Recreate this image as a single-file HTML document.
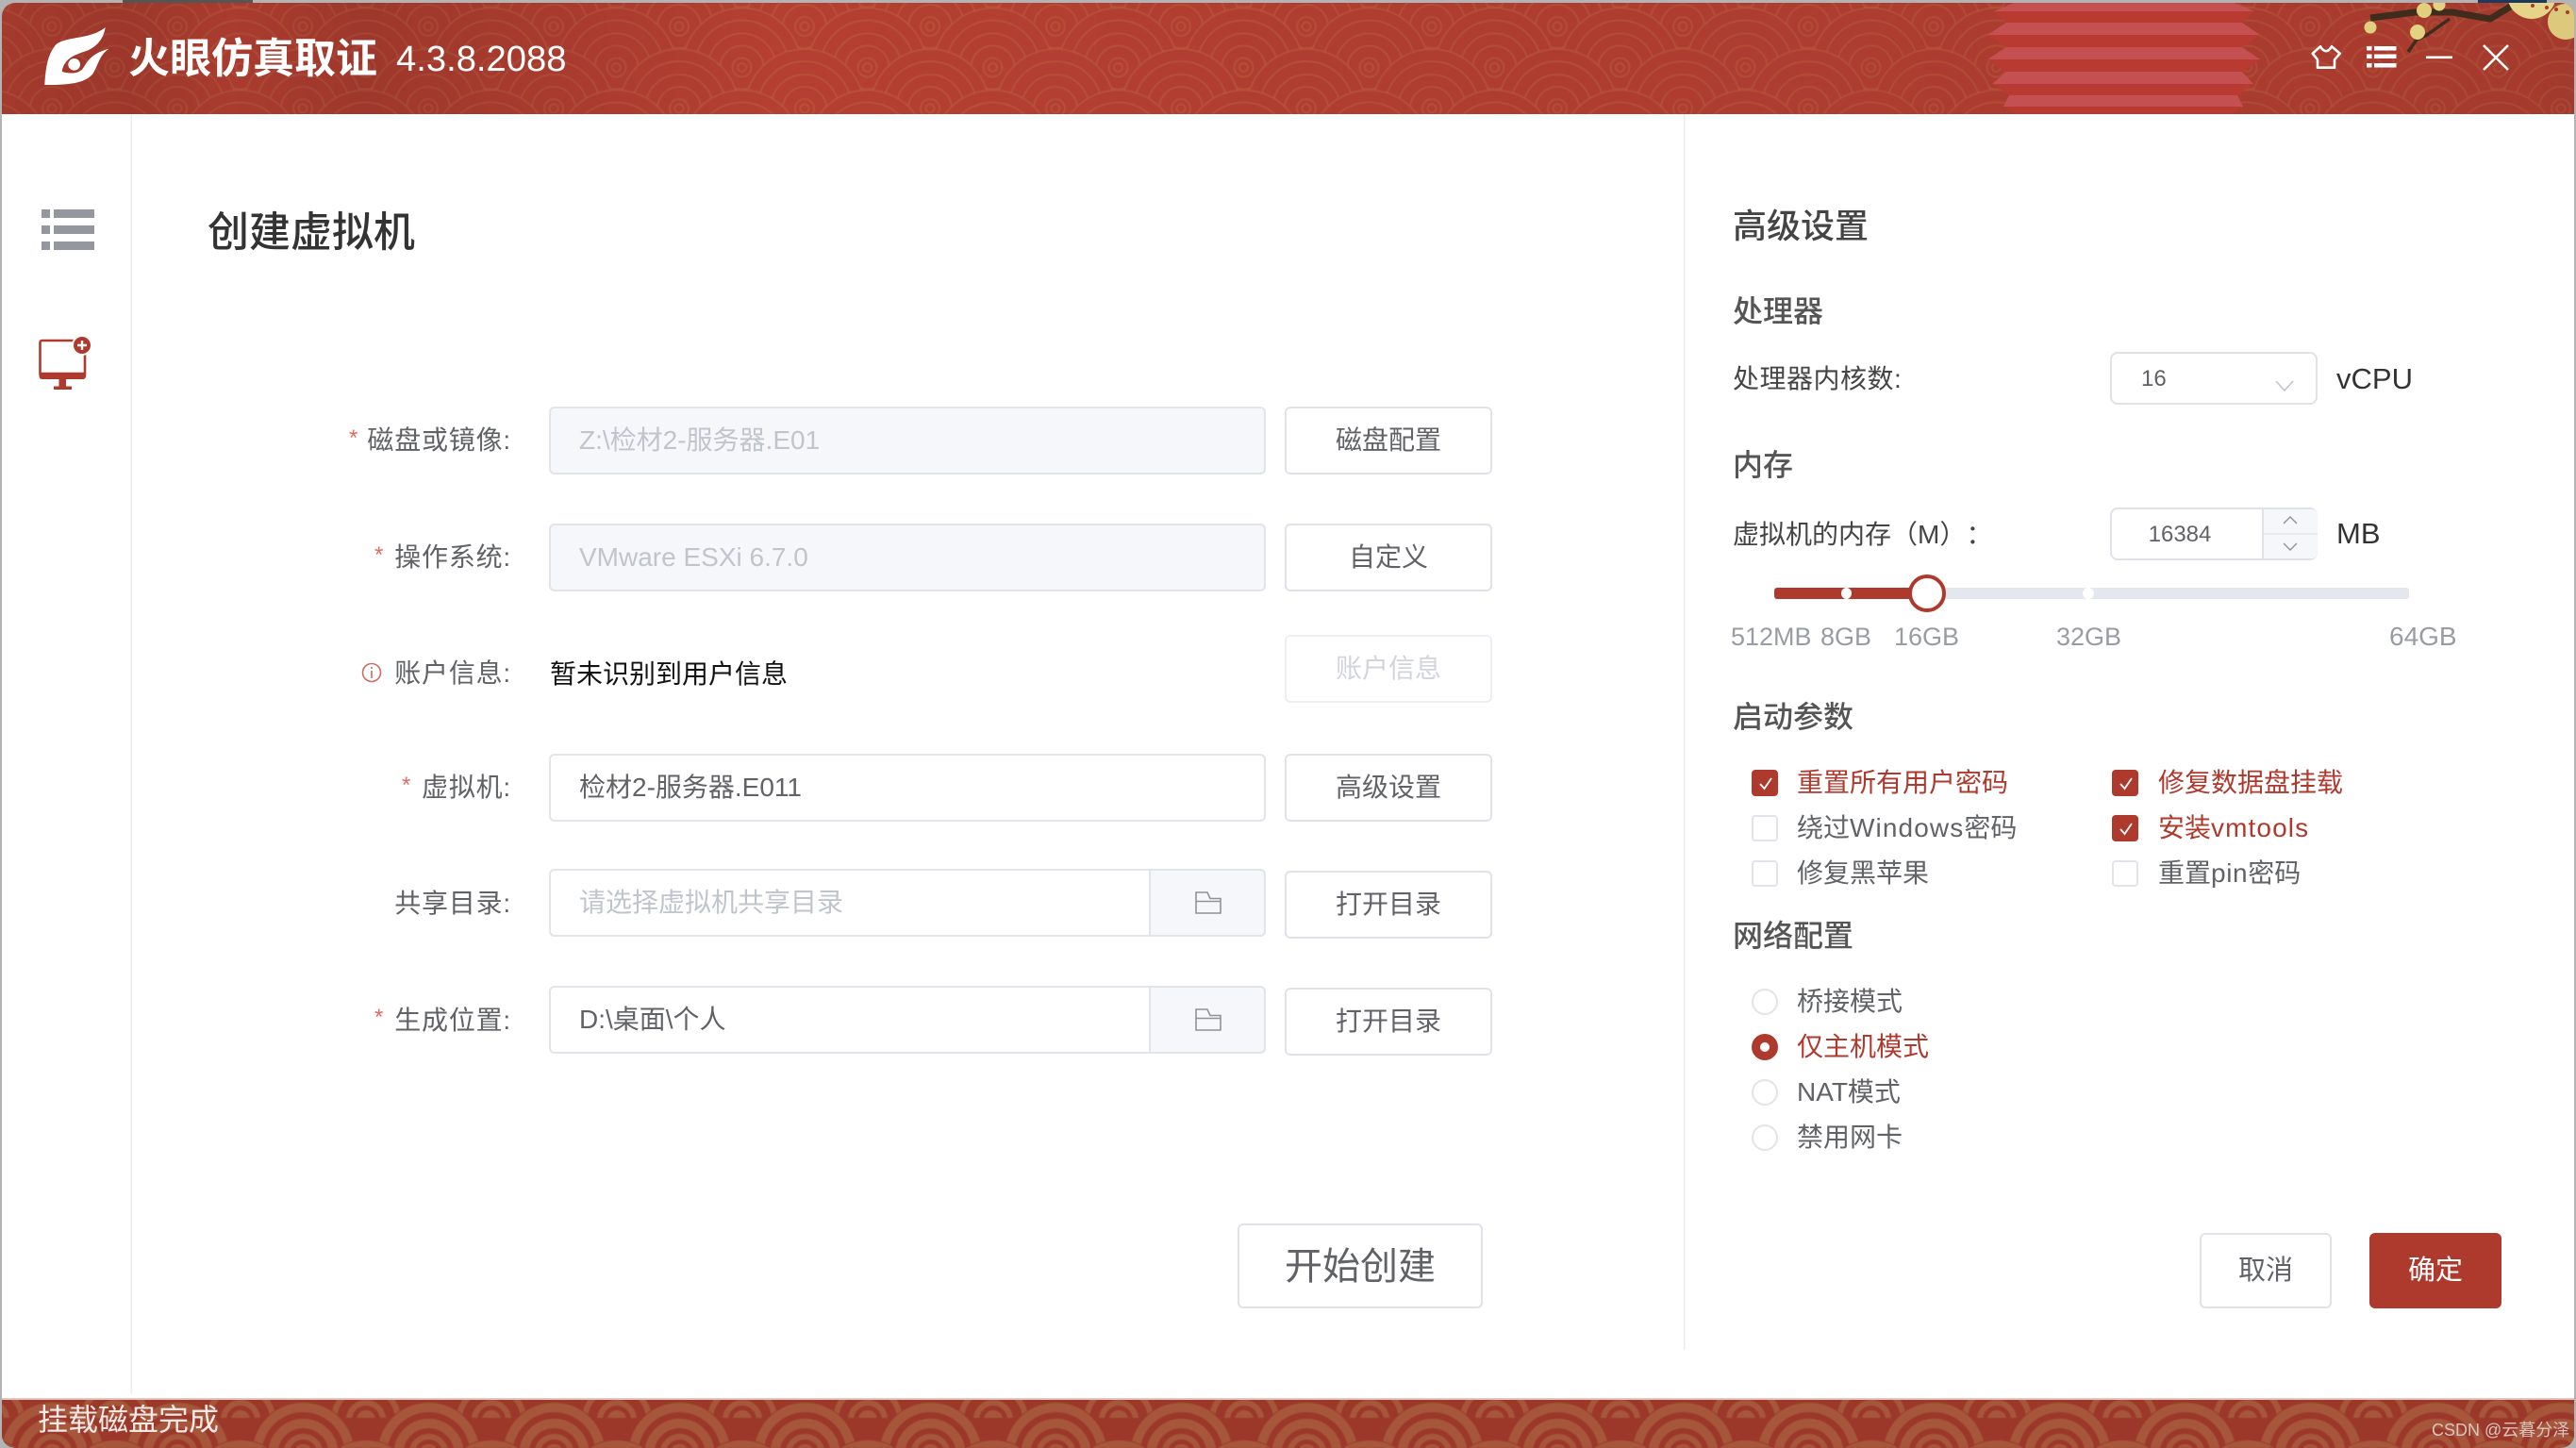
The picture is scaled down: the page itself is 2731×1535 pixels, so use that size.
<!DOCTYPE html>
<html lang="zh-CN"><head><meta charset="utf-8"><title>火眼仿真取证</title>
<style>
html,body{margin:0;padding:0;width:2731px;height:1535px;overflow:hidden;background:#b4b4b4}
body{position:relative;font-family:"Liberation Sans","Noto Sans CJK SC",sans-serif;color:#606266;text-spacing-trim:space-all}
svg.bg{position:absolute;left:0;top:0}
.t{position:absolute;white-space:nowrap;height:40px;line-height:40px;font-size:28px}
.r{text-align:right;right:calc(2731px - 542px);letter-spacing:.8px}
.a{position:absolute;white-space:nowrap;color:#dd6b62;font-size:24px;height:24px;line-height:24px}
.b{position:absolute;box-sizing:border-box;border:2px solid #e0e2e8;border-radius:6px;background:#fff;text-align:center;font-size:28px;color:#606266;white-space:nowrap}
.i{position:absolute;box-sizing:border-box;left:582px;width:760px;height:72px;border:2px solid #e2e4ea;border-radius:6px;background:#fff;font-size:28px;line-height:67px;padding-left:30px;color:#606266;white-space:nowrap;overflow:hidden}
.d{background:#f5f7fa;color:#c0c4cc}
.ap{position:absolute;left:1218px;width:124px;height:72px;box-sizing:border-box;border:2px solid #e2e4ea;border-radius:0 6px 6px 0;background:#f5f7fa}
.h{font-size:32px;font-weight:500;color:#555;left:1837px}
.c{position:absolute;box-sizing:border-box;width:28px;height:28px;border:2px solid #e2e4ea;border-radius:4px;background:#fff}
.c.on{background:#ae3a2e;border-color:#ae3a2e}
.c svg{position:absolute;left:3px;top:3px}
.o{position:absolute;box-sizing:border-box;left:1857px;width:28px;height:28px;border:2px solid #e2e4ea;border-radius:50%;background:#fff}
.on2{background:#ae3a2e;border-color:#ae3a2e}
.on2:after{content:"";position:absolute;left:7px;top:7px;width:10px;height:10px;background:#fff;border-radius:50%}
.red{color:#ae3a2e}
.lab{color:#9a9ca3;font-size:27px}
.w{letter-spacing:1.1px}
.btn{left:1362px;width:220px;height:72px;line-height:68px}
</style></head><body>
<svg class="bg" width="2731" height="1535" viewBox="0 0 2731 1535" xmlns="http://www.w3.org/2000/svg">
<defs>
<g id="s" fill="none" stroke="#bc543d" stroke-width="1.600">
<circle r="63" fill="#b63f30"/><circle r="50"/><circle r="36"/><circle r="23"/><circle r="10"/><circle r="4.500"/>
</g>
<g id="f" fill="none" stroke="#a6563a">
<circle r="55" fill="#9c382c" stroke="none"/>
<circle r="49" stroke-width="10"/><circle r="32" stroke-width="10"/><circle r="18" stroke-width="6"/><circle r="10" fill="#a6563a" stroke="none"/>
</g>
<g id="f0" fill="none" stroke="#a6563a">
<circle r="34" stroke-width="6"/><circle r="18" stroke-width="6"/><circle r="10" fill="#a6563a" stroke="none"/>
</g>
<pattern id="ph" patternUnits="userSpaceOnUse" width="133" height="87" patternTransform="translate(55 28)">
<rect width="133" height="87" fill="#b63f30"/>
<use href="#s" x="-66.500" y="-43.500"/><use href="#s" x="66.500" y="-43.500"/><use href="#s" x="199.500" y="-43.500"/>
<use href="#s" x="0" y="0"/><use href="#s" x="133" y="0"/>
<use href="#s" x="-66.500" y="43.500"/><use href="#s" x="66.500" y="43.500"/><use href="#s" x="199.500" y="43.500"/>
<use href="#s" x="0" y="87"/><use href="#s" x="133" y="87"/>
<use href="#s" x="-66.500" y="130.500"/><use href="#s" x="66.500" y="130.500"/><use href="#s" x="199.500" y="130.500"/>
</pattern>
<pattern id="pf" patternUnits="userSpaceOnUse" width="133" height="76" patternTransform="translate(255 1469)">
<rect width="133" height="76" fill="#9c382c"/>
<use href="#f0" x="0" y="36"/><use href="#f0" x="133" y="36"/>
<rect y="34" width="133" height="42" fill="#9c382c"/>
<use href="#f" x="-66.500" y="72"/><use href="#f" x="66.500" y="72"/><use href="#f" x="199.500" y="72"/>
<use href="#f" x="0" y="112"/><use href="#f" x="133" y="112"/>
</pattern>
<linearGradient id="sh" x1="0" x2="1" y1="0" y2="0">
<stop offset="0" stop-color="#000" stop-opacity=".1"/>
<stop offset=".05" stop-color="#000" stop-opacity=".14"/>
<stop offset=".09" stop-color="#000" stop-opacity=".07"/>
<stop offset=".14" stop-color="#000" stop-opacity=".13"/>
<stop offset=".24" stop-color="#000" stop-opacity=".06"/>
<stop offset=".3" stop-color="#000" stop-opacity=".01"/>
<stop offset=".4" stop-color="#000" stop-opacity=".02"/>
<stop offset=".55" stop-color="#000" stop-opacity=".04"/>
<stop offset=".7" stop-color="#000" stop-opacity=".05"/>
<stop offset=".9" stop-color="#000" stop-opacity=".07"/>
<stop offset="1" stop-color="#000" stop-opacity=".1"/>
</linearGradient>
<filter id="bl" x="-1%" y="-10%" width="102%" height="120%"><feGaussianBlur stdDeviation=".6"/></filter>
<clipPath id="win"><rect x="2" y="3" width="2727" height="1532" rx="14"/></clipPath>
<clipPath id="hc"><rect x="0" y="0" width="2731" height="121"/></clipPath>
</defs>
<rect width="2731" height="1535" fill="#b4b4b4"/>
<rect x="130" y="0" width="138" height="3" fill="#555"/>
<rect x="2627" y="0" width="73" height="3" fill="#1c3a5c"/>
<g clip-path="url(#win)">
<rect x="0" y="0" width="2731" height="1535" fill="#fff"/>
<g clip-path="url(#hc)"><rect x="0" y="-8" width="2731" height="140" fill="url(#ph)" filter="url(#bl)"/></g>
<rect x="0" y="0" width="2731" height="121" fill="url(#sh)"/>
<!-- lantern -->
<g>
<polygon points="2135,3 2369,3 2390,12 2114,12" fill="#c55052"/><polygon points="2114,12 2390,12 2377,24 2127,24" fill="#b93a30"/>
<polygon points="2127,24 2377,24 2396,37 2107,37" fill="#c55052"/><polygon points="2107,37 2396,37 2377,50 2127,50" fill="#b93a30"/>
<polygon points="2127,50 2377,50 2396,63 2107,63" fill="#c55052"/><polygon points="2107,63 2396,63 2377,76 2127,76" fill="#b93a30"/>
<polygon points="2127,76 2377,76 2389,89 2112,89" fill="#c55052"/><polygon points="2112,89 2389,89 2372,101 2130,101" fill="#b93a30"/>
<polygon points="2130,101 2372,101 2378,113 2124,113" fill="#c55052"/><polygon points="2124,113 2378,113 2366,121 2136,121" fill="#b93a30"/>
</g>
<!-- plum branch -->
<g>
<path d="M2513 19 L2560 13 L2600 13 L2640 20 L2668 3" fill="none" stroke="#3f2c1c" stroke-width="7" stroke-linejoin="round"/>
<path d="M2597 20 L2573 37 L2562 42 L2553 55" fill="none" stroke="#3f2c1c" stroke-width="3.500"/>
<circle cx="2513" cy="29" r="6.500" fill="#e0cf7d"/><circle cx="2563" cy="34" r="8" fill="#e3d27f"/>
<circle cx="2570" cy="11" r="8" fill="#e0cf7d"/><circle cx="2586" cy="5" r="6.500" fill="#e3d27f"/>
<circle cx="2684" cy="-6" r="26" fill="#e6d588"/><circle cx="2720" cy="23" r="19" fill="#dcc97b"/>
<circle cx="2685" cy="6" r="2" fill="#a83a2e"/><circle cx="2700" cy="8" r="2" fill="#a83a2e"/>
<circle cx="2710" cy="10" r="2" fill="#a83a2e"/><circle cx="2722" cy="13" r="2" fill="#a83a2e"/>
</g>
<!-- footer -->
<rect x="0" y="1483" width="2731" height="52" fill="#9c382c"/>
<rect x="0" y="1483" width="2731" height="52" fill="url(#pf)" filter="url(#bl)"/>
<rect x="0" y="1482" width="2731" height="2" fill="#e2c4bc"/>
<!-- dividers -->
<rect x="138.500" y="121" width="1.500" height="1356" fill="#ececee"/>
<rect x="1785" y="121" width="1.500" height="1310" fill="#ececee"/>
</g>
<!-- logo -->
<g transform="translate(30 15) scale(.3333)">
<path fill="#fff" d="M52 225C55 170 62 125 90 95C125 70 200 80 245 42C240 75 222 100 190 115C160 125 125 135 112 165C108 175 107 180 108 183C130 190 158 190 172 175C185 160 190 128 257 110C225 130 222 165 205 190C180 220 130 225 52 225Z"/>
<circle cx="146" cy="160" r="19" fill="#fff"/>
</g>
<!-- window controls -->
<path d="M2460 49.300Q2466 59 2472 49.300L2480.700 56.700L2475 63.300V71.700H2457V63.300L2451.700 56.700Z" fill="none" stroke="#fff" stroke-width="2.600" stroke-linejoin="round"/>
<g fill="#fff"><rect x="2509" y="49" width="5.500" height="4.500"/><rect x="2517" y="49" width="23.500" height="4.500"/><rect x="2509" y="57.500" width="5.500" height="4.500"/><rect x="2517" y="57.500" width="23.500" height="4.500"/><rect x="2509" y="67" width="5.500" height="4.500"/><rect x="2517" y="67" width="23.500" height="4.500"/>
<rect x="2572" y="59.500" width="28" height="2.600"/></g>
<path d="M2633 48L2659 74M2659 48L2633 74" stroke="#fff" stroke-width="2.600" fill="none"/>
<!-- sidebar -->
<g fill="#95979e"><rect x="44" y="222" width="9" height="9"/><rect x="57" y="222" width="43" height="9"/><rect x="44" y="239" width="9" height="9"/><rect x="57" y="239" width="43" height="9"/><rect x="44" y="256" width="9" height="9"/><rect x="57" y="256" width="43" height="9"/></g>
<g>
<path d="M44 361H88a2 2 0 0 1 2 2V396H42.500V363a2 2 0 0 1 2-2Z" fill="none" stroke="#ae3a2e" stroke-width="2.600"/>
<path d="M41.500 395H91V399a3 3 0 0 1-3 3H44.500a3 3 0 0 1-3-3Z" fill="#ae3a2e"/>
<rect x="62.500" y="402" width="7.500" height="8" fill="#ae3a2e"/><rect x="57" y="409.500" width="19" height="3.500" fill="#ae3a2e"/>
<circle cx="87" cy="366" r="11" fill="#fff"/><circle cx="87" cy="366" r="9" fill="#ae3a2e"/>
<path d="M82 366H92M87 361V371" stroke="#fff" stroke-width="2.400"/>
</g>
<!-- form icons -->
<circle cx="394" cy="713" r="9.500" fill="none" stroke="#d0695f" stroke-width="1.600"/>
<path d="M394 711V719M394 707V709" stroke="#d0695f" stroke-width="1.600"/>
</svg>

<div class="t" style="left:136px;top:41px;height:44px;line-height:44px;font-size:44px;font-weight:700;color:#fff">火眼仿真取证</div>
<div class="t" style="left:420px;top:43px;font-size:38.200px;color:#fff">4.3.8.2088</div>
<div class="t" style="left:220px;top:225px;height:44px;line-height:44px;font-size:44px;font-weight:500;color:#333">创建虚拟机</div>

<div class="a" style="left:370px;top:453px">*</div><div class="t r" style="top:447px">磁盘或镜像:</div>
<div class="i d" style="top:431px">Z:\检材2-服务器.E01</div>
<div class="b btn" style="top:431px">磁盘配置</div>

<div class="a" style="left:397px;top:577px">*</div><div class="t r" style="top:571px">操作系统:</div>
<div class="i d" style="top:555px">VMware ESXi 6.7.0</div>
<div class="b btn" style="top:555px">自定义</div>

<div class="t r" style="top:694px">账户信息:</div>
<div class="t" style="left:583px;top:695px;color:#111">暂未识别到用户信息</div>
<div class="b btn" style="top:673px;color:#d2d4da;border-color:#eceef2">账户信息</div>

<div class="a" style="left:426px;top:821px">*</div><div class="t r" style="top:815px">虚拟机:</div>
<div class="i" style="top:799px">检材2-服务器.E011</div>
<div class="b btn" style="top:799px">高级设置</div>

<div class="t r" style="top:938px">共享目录:</div>
<div class="i" style="top:921px;color:#c0c4cc">请选择虚拟机共享目录</div>
<div class="ap" style="top:921px"><svg width="120" height="68" style="position:absolute;left:0;top:0"><path d="M48 45V23H60L63 29.500H74V45ZM48 32.500H74" fill="none" stroke="#909299" stroke-width="1.600"/></svg></div>
<div class="b btn" style="top:923px">打开目录</div>

<div class="a" style="left:397px;top:1067px">*</div><div class="t r" style="top:1062px">生成位置:</div>
<div class="i" style="top:1045px">D:\桌面\个人</div>
<div class="ap" style="top:1045px"><svg width="120" height="68" style="position:absolute;left:0;top:0"><path d="M48 45V23H60L63 29.500H74V45ZM48 32.500H74" fill="none" stroke="#909299" stroke-width="1.600"/></svg></div>
<div class="b btn" style="top:1047px">打开目录</div>

<div class="b" style="left:1312px;top:1297px;width:260px;height:90px;line-height:89px;font-size:40px">开始创建</div>

<div class="t" style="left:1837px;top:220px;font-size:36px;font-weight:500;color:#444">高级设置</div>
<div class="t h" style="top:310px">处理器</div>
<div class="t" style="left:1837px;top:382px;color:#444;letter-spacing:.5px">处理器内核数:</div>
<div class="b" style="left:2237px;top:373px;width:220px;height:56px;line-height:53px;text-align:left;padding-left:31px;font-size:24px;border-radius:8px">16<svg width="20" height="12" style="position:absolute;left:173px;top:28px"><path d="M1 1L10 11L19 1" fill="none" stroke="#c0c4cc" stroke-width="1.600"/></svg></div>
<div class="t" style="left:2477px;top:382px;font-size:31px;color:#333">vCPU</div>

<div class="t h" style="top:473px">内存</div>
<div class="t" style="left:1837px;top:547px;color:#444">虚拟机的内存（M）：</div>
<div class="b" style="left:2237px;top:538px;width:220px;height:56px;line-height:53px;font-size:24px;border-radius:8px;padding-right:72px">16384
<div style="position:absolute;left:159px;top:0;width:57px;height:52px;background:#f5f7fa;border-left:2px solid #e0e2e8;border-radius:0 6px 6px 0"><div style="height:25px;border-bottom:2px solid #e8eaef"></div>
<svg width="57" height="52" style="position:absolute;left:0;top:0"><path d="M21 15L28 8L35 15M21 36L28 43L35 36" fill="none" stroke="#8f9198" stroke-width="1.400"/></svg></div></div>
<div class="t" style="left:2477px;top:546px;font-size:31px;color:#333">MB</div>

<div style="position:absolute;left:1881px;top:623px;width:673px;height:12px;background:#e4e7ed;border-radius:3px"></div>
<div style="position:absolute;left:1881px;top:623px;width:162px;height:12px;background:#ae3a2e;border-radius:3px 0 0 3px"></div>
<div style="position:absolute;left:1952px;top:623px;width:11px;height:12px;background:#fff;border-radius:50%"></div>
<div style="position:absolute;left:2208px;top:623px;width:12px;height:12px;background:#fff;border-radius:50%"></div>
<div style="position:absolute;left:2023px;top:609px;width:40px;height:40px;box-sizing:border-box;border:4px solid #ae3a2e;background:#fff;border-radius:50%"></div>
<div class="t lab" style="left:1835px;top:655px">512MB</div>
<div class="t lab" style="left:1930px;top:655px">8GB</div>
<div class="t lab" style="left:2008px;top:655px">16GB</div>
<div class="t lab" style="left:2180px;top:655px">32GB</div>
<div class="t lab" style="left:2533px;top:655px;font-size:28px">64GB</div>

<div class="t h" style="top:740px">启动参数</div>
<div class="c on" style="left:1857px;top:816px"><svg width="20" height="20"><path d="M4 10L8.500 15L16 4" fill="none" stroke="#fff" stroke-width="1.800"/></svg></div><div class="t red" style="left:1905px;top:810px">重置所有用户密码</div>
<div class="c" style="left:1857px;top:864px"></div><div class="t" style="left:1905px;top:858px">绕过<span class="w">Windows</span>密码</div>
<div class="c" style="left:1857px;top:912px"></div><div class="t" style="left:1905px;top:906px">修复黑苹果</div>
<div class="c on" style="left:2239px;top:816px"><svg width="20" height="20"><path d="M4 10L8.500 15L16 4" fill="none" stroke="#fff" stroke-width="1.800"/></svg></div><div class="t red" style="left:2288px;top:810px">修复数据盘挂载</div>
<div class="c on" style="left:2239px;top:864px"><svg width="20" height="20"><path d="M4 10L8.500 15L16 4" fill="none" stroke="#fff" stroke-width="1.800"/></svg></div><div class="t red" style="left:2288px;top:858px">安装<span class="w">vmtools</span></div>
<div class="c" style="left:2239px;top:912px"></div><div class="t" style="left:2288px;top:906px">重置<span style="letter-spacing:.6px">pin</span>密码</div>

<div class="t h" style="top:972px">网络配置</div>
<div class="o" style="top:1048px"></div><div class="t" style="left:1905px;top:1042px">桥接模式</div>
<div class="o on2" style="top:1096px"></div><div class="t red" style="left:1905px;top:1090px">仅主机模式</div>
<div class="o" style="top:1144px"></div><div class="t" style="left:1905px;top:1138px">NAT模式</div>
<div class="o" style="top:1192px"></div><div class="t" style="left:1905px;top:1186px">禁用网卡</div>

<div class="b" style="left:2332px;top:1307px;width:140px;height:80px;line-height:77px;font-size:29px">取消</div>
<div class="b" style="left:2512px;top:1307px;width:140px;height:80px;line-height:77px;font-size:29px;background:#ae3a2e;border-color:#ae3a2e;color:#fff">确定</div>

<div class="t" style="left:40px;top:1485px;font-size:32px;color:#f2e8e6">挂载磁盘完成</div>
<div class="t" style="left:2578px;top:1496px;font-size:18px;color:#d9c6be">CSDN @云暮分泽</div>
</body></html>
